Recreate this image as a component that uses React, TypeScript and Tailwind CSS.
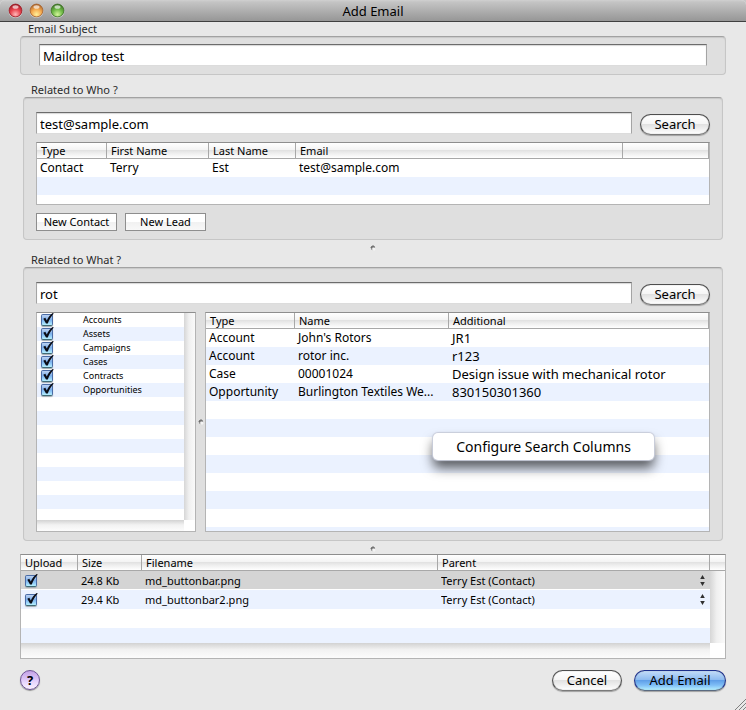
import { useState } from "react";
import type { ReactNode } from "react";

const header =
  "h-[16px] border-r border-b border-[#a8a8a8] bg-[linear-gradient(#ffffff_0%,#f4f4f4_44%,#e2e2e2_50%,#ececec_65%,#ffffff_100%)] p-0 pl-1 text-left text-[11px] leading-[15px] font-normal";
const lastHeader =
  "h-[16px] border-b border-[#a8a8a8] bg-[linear-gradient(#ffffff_0%,#f4f4f4_44%,#e2e2e2_50%,#ececec_65%,#ffffff_100%)] p-0";
const cell = "truncate p-0 pl-[3px]";
const textField =
  "block h-[22px] w-full min-w-0 border border-[#a4a4a4] border-t-[#6c6c6c] border-b-[#dcdcdc] bg-white px-[3px] pt-[2px] text-[13px] shadow-[inset_0_1px_1px_#d8d8d8] outline-none";
const vTrack = "bg-[linear-gradient(90deg,#d6d6d6,#f0f0f0_45%,#fafafa)]";
const hTrack = "bg-[linear-gradient(#d2d2d2,#f2f2f2_45%,#fcfcfc)]";

function Light({ id, dark, mid, light }: { id: string; dark: string; mid: string; light: string }) {
  return (
    <button type="button" aria-label={id} className="block h-[15px] w-[15px]">
      <svg viewBox="0 0 15 15" className="h-[15px] w-[15px]" aria-hidden="true">
        <defs>
          <radialGradient id={id} cx="50%" cy="80%" r="80%">
            <stop offset="0" stopColor={light} />
            <stop offset="0.5" stopColor={mid} />
            <stop offset="1" stopColor={dark} />
          </radialGradient>
        </defs>
        <circle cx="7.5" cy="8" r="7" fill="#d0d0d0" />
        <circle cx="7.5" cy="7.5" r="6.4" fill={`url(#${id})`} stroke={dark} strokeOpacity="0.8" />
        <ellipse cx="7.5" cy="4" rx="3" ry="1.8" fill="#fff" opacity="0.65" />
      </svg>
    </button>
  );
}

function Check({ label, id }: { label: string; id: string }) {
  const [on, setOn] = useState(true);
  return (
    <span className="grid h-[14px] w-[13px]">
      <input
        id={id}
        type="checkbox"
        aria-label={label}
        checked={on}
        onChange={() => setOn(!on)}
        className="col-start-1 row-start-1 mt-px h-[12px] w-[12px] appearance-none rounded-[2px] border border-[#4a6ca6] border-b-[#3f6c78] bg-[linear-gradient(#bdd3f3,#7fb0ea_45%,#86bff4_60%,#b6f0ff)] shadow-[0_1px_1px_#a0a8b0]"
      />
      {on && (
        <svg
          viewBox="0 0 13 14"
          className="pointer-events-none col-start-1 row-start-1 h-[14px] w-[13px]"
          aria-hidden="true"
        >
          <path
            d="M2.3 5.8 L4.3 4.8 L5.8 7.4 C7.4 4.2 9.3 1.6 11.6 0 L12.8 0.6 C10.2 3.4 8.3 6.4 6.8 10.4 L5 10.4 Z"
            fill="#0b0d16"
          />
        </svg>
      )}
    </span>
  );
}

function Pill({ children, primary = false, wide = false }: { children: ReactNode; primary?: boolean; wide?: boolean }) {
  const look = primary
    ? "border-[#1c2f8c] border-b-[#5a6a80] bg-[linear-gradient(#c3dcf8_0%,#8fbcf0_45%,#5f9fe8_50%,#7fbef6_75%,#b4f0ff_100%)]"
    : "border-[#4e4e4e] border-b-[#7a7a7a] bg-[linear-gradient(#ffffff_0%,#f6f6f6_45%,#e2e2e2_50%,#f0f0f0_75%,#ffffff_100%)]";
  return (
    <button
      type="button"
      className={`${look} ${wide ? "w-[92px]" : "w-[70px]"} block h-[21px] shrink-0 rounded-full border text-[13px] leading-[19px] shadow-[0_1px_1px_#a0a0a0,inset_0_0_1px_#808080]`}
    >
      {children}
    </button>
  );
}

function SquareButton({ children }: { children: ReactNode }) {
  return (
    <button
      type="button"
      className="h-[18px] w-[81px] border border-[#8e8e8e] bg-[linear-gradient(#ffffff_50%,#f1f1f1_50%,#f8f8f8)] text-[11px] leading-4"
    >
      {children}
    </button>
  );
}

function Group({ title, children, className }: { title: string; children: ReactNode; className: string }) {
  return (
    <section aria-label={title}>
      <h2 className="pl-2 text-[11px] leading-[14px] font-normal text-[#2a2a2a]">{title}</h2>
      <div
        className={`${className} rounded-[4px] border border-[#c6c6c6] border-t-[#a2a2a2] bg-[#dfdfdf] shadow-[inset_0_1px_1px_#c8c8c8]`}
      >
        {children}
      </div>
    </section>
  );
}

function SearchBar({ label, value }: { label: string; value: string }) {
  return (
    <div className="flex items-start gap-2">
      <input aria-label={label} defaultValue={value} className={textField} />
      <div className="pt-[2px]">
        <Pill>Search</Pill>
      </div>
    </div>
  );
}

function Dimple() {
  return (
    <svg viewBox="0 0 6 6" className="h-[6px] w-[6px]" aria-hidden="true">
      <circle cx="3" cy="3" r="2.2" fill="#8a8a8a" />
      <circle cx="3.8" cy="4.1" r="1.7" fill="#f4f4f4" />
      <path d="M1 3 A2 2 0 0 1 4.4 1.6" fill="none" stroke="#606060" />
    </svg>
  );
}

const kinds = ["Accounts", "Assets", "Campaigns", "Cases", "Contracts", "Opportunities"];
const results = [
  ["Account", "John's Rotors", "JR1"],
  ["Account", "rotor inc.", "r123"],
  ["Case", "00001024", "Design issue with mechanical rotor"],
  ["Opportunity", "Burlington Textiles We...", "830150301360"],
];
const files = [
  ["24.8 Kb", "md_buttonbar.png"],
  ["29.4 Kb", "md_buttonbar2.png"],
];

export default function App() {
  return (
    <div className="bg-[#c8c8c8]">
      <main className="flex min-h-screen flex-col overflow-hidden rounded-t-[5px] bg-[#e8e8e8] font-['Noto_Sans','Open_Sans',sans-serif] text-black">
        <header className="grid h-[22px] shrink-0 grid-cols-[1fr_auto_1fr] items-center border-b border-[#404040] bg-[linear-gradient(#d0d0d0,#c4c4c4_10%,#969696)] px-2">
          <div className="flex gap-[6px]">
            <Light id="close" dark="#9a1822" mid="#ea4650" light="#ffb8b8" />
            <Light id="minimize" dark="#a4602a" mid="#f5ab50" light="#fff09a" />
            <Light id="zoom" dark="#3c7024" mid="#70bb48" light="#d4f59a" />
          </div>
          <h1 className="text-[13px] leading-5 font-normal">Add Email</h1>
        </header>

        <div className="px-5">
          <Group title="Email Subject" className="h-[39px] px-[18px] pt-[7px]">
            <input aria-label="Email Subject" defaultValue="Maildrop test" className={textField} />
          </Group>
        </div>

        <div className="px-[23px] pt-2">
          <Group title="Related to Who ?" className="px-3 pt-[14px] pb-2">
            <SearchBar label="Search people" value="test@sample.com" />
            <div className="mt-[7px] h-[63px] border border-[#b4b4b4] border-t-[#8e8e8e] bg-[linear-gradient(#ffffff_34px,#ebf2ff_34px,#ebf2ff_52px,#ffffff_52px)]">
              <table className="w-full table-fixed border-separate border-spacing-0">
                <colgroup>
                  <col className="w-[70px]" />
                  <col className="w-[102px]" />
                  <col className="w-[87px]" />
                  <col />
                  <col className="w-[86px]" />
                </colgroup>
                <thead>
                  <tr>
                    <th className={header}>Type</th>
                    <th className={header}>First Name</th>
                    <th className={header}>Last Name</th>
                    <th className={header}>Email</th>
                    <th className={header}></th>
                  </tr>
                </thead>
                <tbody>
                  <tr className="h-[18px] text-[12px] leading-[18px]">
                    <td className={cell}>Contact</td>
                    <td className={cell}>Terry</td>
                    <td className={cell}>Est</td>
                    <td className={cell}>test@sample.com</td>
                    <td className="p-0"></td>
                  </tr>
                </tbody>
              </table>
            </div>
            <div className="mt-2 flex gap-2">
              <SquareButton>New Contact</SquareButton>
              <SquareButton>New Lead</SquareButton>
            </div>
          </Group>
        </div>

        <div className="flex h-[13px] items-center justify-center pt-[2px]">
          <Dimple />
        </div>

        <div className="px-[23px]">
          <Group title="Related to What ?" className="px-3 pt-[14px] pb-2">
            <SearchBar label="Search records" value="rot" />
            <div className="mt-[7px] flex h-[220px]">
              <div className="flex w-[160px] shrink-0 flex-col border border-[#b4b4b4] border-t-[#8e8e8e] bg-white">
                <div className="flex min-h-0 flex-1">
                  <ul className="flex-1 bg-[repeating-linear-gradient(#ffffff_0px,#ffffff_14px,#ebf2ff_14px,#ebf2ff_28px)]">
                    {kinds.map((kind) => (
                      <li key={kind} className="flex h-[14px] items-center gap-[29px] pl-1">
                        <Check id={kind} label={kind} />
                        <label htmlFor={kind} className="text-[9px] leading-[14px]">
                          {kind}
                        </label>
                      </li>
                    ))}
                  </ul>
                  <div className={`${vTrack} w-[11px]`} />
                </div>
                <div className="flex h-[11px]">
                  <div className={`${hTrack} flex-1`} />
                  <div className="w-[11px]" />
                </div>
              </div>
              <div className="flex w-[9px] shrink-0 items-center justify-center">
                <Dimple />
              </div>
              <div className="relative min-w-0 flex-1 border border-[#b4b4b4] border-t-[#8e8e8e] bg-[repeating-linear-gradient(#ebf2ff_0px,#ebf2ff_16px,#ffffff_16px,#ffffff_34px,#ebf2ff_34px,#ebf2ff_36px)]">
                <table className="w-full table-fixed border-separate border-spacing-0">
                  <colgroup>
                    <col className="w-[89px]" />
                    <col className="w-[154px]" />
                    <col />
                  </colgroup>
                  <thead>
                    <tr>
                      <th className={header}>Type</th>
                      <th className={header}>Name</th>
                      <th className={header}>Additional</th>
                    </tr>
                  </thead>
                  <tbody>
                    {results.map(([type, name, extra]) => (
                      <tr key={name} className="h-[18px] text-[12px] leading-[18px]">
                        <td className={cell}>{type}</td>
                        <td className={cell}>{name}</td>
                        <td className="truncate p-0 pl-[3px] text-[13px]">{extra}</td>
                      </tr>
                    ))}
                  </tbody>
                </table>
                <div
                  role="menu"
                  className="absolute top-[120px] left-[227px] rounded-[5px] bg-white shadow-[0_0_1px_1px_#c8ccda,0_8px_12px_#000000a0]"
                >
                  <button type="button" role="menuitem" className="block h-[27px] w-[221px] text-[14px] leading-[27px]">
                    Configure Search Columns
                  </button>
                </div>
              </div>
            </div>
          </Group>
        </div>

        <div className="flex h-[13px] items-center justify-center pt-[2px]">
          <Dimple />
        </div>

        <div className="px-5">
          <div className="border border-[#b4b4b4] border-t-[#8e8e8e] bg-white">
            <table className="w-full table-fixed border-separate border-spacing-0">
              <colgroup>
                <col className="w-[57px]" />
                <col className="w-[64px]" />
                <col className="w-[296px]" />
                <col />
                <col className="w-[15px]" />
              </colgroup>
              <thead>
                <tr>
                  <th className={header}>Upload</th>
                  <th className={header}>Size</th>
                  <th className={header}>Filename</th>
                  <th className={header}>Parent</th>
                  <th className={lastHeader}></th>
                </tr>
              </thead>
              <tbody>
                {files.map(([size, name], i) => (
                  <tr
                    key={name}
                    className={
                      i === 0
                        ? "h-[19px] bg-[linear-gradient(#d4d4d4_18px,#ffffff_18px)] text-[11px] leading-[18px]"
                        : "h-[19px] bg-[#ebf2ff] text-[11px] leading-[18px]"
                    }
                  >
                    <td className="p-0 pl-1">
                      <Check id={name} label={`Upload ${name}`} />
                    </td>
                    <td className={cell}>{size}</td>
                    <td className={cell}>{name}</td>
                    <td className="p-0 pl-[3px]">
                      <span className="grid items-center">
                        <select
                          aria-label={`Parent of ${name}`}
                          className="col-start-1 row-start-1 h-[18px] w-full appearance-none text-[11px] leading-[18px] outline-none"
                        >
                          <option>Terry Est (Contact)</option>
                        </select>
                        <svg
                          viewBox="0 0 5 11"
                          className="pointer-events-none col-start-1 row-start-1 mr-[5px] h-[11px] w-[5px] justify-self-end"
                          aria-hidden="true"
                        >
                          <path d="M2.5 0 L4.8 4 H0.2 Z M2.5 11 L4.8 7 H0.2 Z" fill="#303030" />
                        </svg>
                      </span>
                    </td>
                    {i === 0 && <td rowSpan={4} className={vTrack}></td>}
                  </tr>
                ))}
                <tr className="h-[19px] bg-white">
                  <td colSpan={4} className="p-0"></td>
                </tr>
                <tr className="h-[15px] bg-[#ebf2ff]">
                  <td colSpan={4} className="p-0"></td>
                </tr>
              </tbody>
            </table>
            <div className="flex h-[15px]">
              <div className={`${hTrack} flex-1`} />
              <div className="w-[15px]" />
            </div>
          </div>
        </div>

        <footer className="flex items-start gap-3 px-5 pt-[11px]">
          <button
            type="button"
            aria-label="Help"
            className="mr-auto h-[20px] w-[20px] rounded-full border border-[#6f5596] bg-[linear-gradient(#c4a2e6,#dcc4f6_45%,#e6d4fc_60%,#fbf2ff)] text-[13px] leading-[18px] font-bold shadow-[0_1px_1px_#909090]"
          >
            ?
          </button>
          <Pill>Cancel</Pill>
          <Pill primary wide>
            Add Email
          </Pill>
        </footer>

        <svg viewBox="0 0 12 12" className="mt-auto h-[12px] w-[12px] self-end" aria-hidden="true">
          <path d="M1 12 L12 1 M5 12 L12 5 M9 12 L12 9" stroke="#808080" fill="none" />
        </svg>
      </main>
    </div>
  );
}
